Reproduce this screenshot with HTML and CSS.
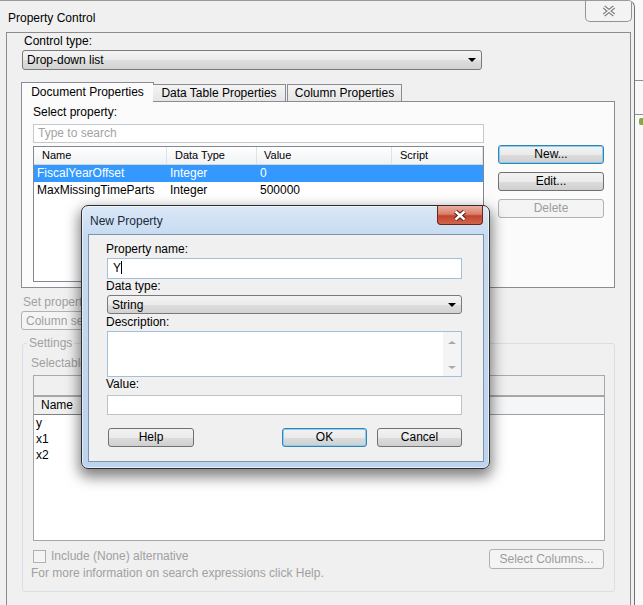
FILE: index.html
```html
<!DOCTYPE html>
<html>
  <head>
    <title>Property Control</title>
    <link rel="stylesheet" href="styles.css">
  </head>
  <body>
    <div class="desktop">
      <div class="window">
        <div class="titlebar">
          <span class="title">Property Control</span>
          <div class="caption-close">
            <svg width="14" height="12" viewBox="0 0 14 12">
              <path d="M2 2 L12 10 M12 2 L2 10" stroke="#7d7d7d" stroke-width="3.6" fill="none"/>
              <path d="M2 2 L12 10 M12 2 L2 10" stroke="#f7f7f7" stroke-width="1.6" fill="none"/>
            </svg>
          </div>
        </div>

        <div class="client">
          <div class="label control-label">Control type:</div>
          <div class="combo main-combo">
            <span>Drop-down list</span>
            <span class="arrow"></span>
          </div>

          <div class="tabs">
            <div class="tab tab-doc selected">Document Properties</div>
            <div class="tab tab-dt">Data Table Properties</div>
            <div class="tab tab-col">Column Properties</div>
          </div>
          <div class="tab-panel">
            <div class="label">Select property:</div>
            <div class="prop-row">
              <div class="prop-left">
                <div class="textbox search">Type to search</div>
                <div class="listview">
                  <div class="lv-header">
                    <span class="cell c1">Name</span>
                    <span class="cell c2">Data Type</span>
                    <span class="cell c3">Value</span>
                    <span class="cell c4">Script</span>
                  </div>
                  <div class="lv-row selected">
                    <span class="cell c1">FiscalYearOffset</span>
                    <span class="cell c2">Integer</span>
                    <span class="cell c3">0</span>
                    <span class="cell c4"></span>
                  </div>
                  <div class="lv-row">
                    <span class="cell c1">MaxMissingTimeParts</span>
                    <span class="cell c2">Integer</span>
                    <span class="cell c3">500000</span>
                    <span class="cell c4"></span>
                  </div>
                </div>
              </div>
              <div class="prop-buttons">
                <div class="btn focused">New...</div>
                <div class="btn">Edit...</div>
                <div class="btn disabled">Delete</div>
              </div>
            </div>
          </div>

          <div class="label disabled set-label">Set property value through:</div>
          <div class="combo disabled set-combo">
            <span class="clipped">Column selection</span>
          </div>

          <fieldset class="settings">
            <legend>Settings</legend>
            <div class="label disabled selectable-label">Selectable columns:</div>
            <div class="textbox col-search"></div>
            <div class="col-list">
              <div class="col-header">
                <span class="col-head-cell">Name</span>
              </div>
              <div class="col-item">y</div>
              <div class="col-item">x1</div>
              <div class="col-item">x2</div>
            </div>
            <div class="settings-footer">
              <div class="footer-left">
                <div class="check-line">
                  <span class="checkbox"></span>
                  <span>Include (None) alternative</span>
                </div>
                <div class="info-line">For more information on search expressions click Help.</div>
              </div>
              <div class="btn disabled select-columns">Select Columns...</div>
            </div>
          </fieldset>
        </div>
      </div>

      <div class="backdrop">
        <div class="bd-line first"></div>
        <div class="bd-line second"></div>
        <div class="bd-icon"></div>
      </div>
    </div>

    <div class="dialog">
      <div class="dlg-titlebar">
        <span class="dlg-title">New Property</span>
        <div class="dlg-close">
          <svg width="14" height="11" viewBox="0 0 14 11">
            <path d="M2.5 1.5 L11.5 9.5 M11.5 1.5 L2.5 9.5" stroke="#4a1c14" stroke-width="4.4" fill="none"/>
            <path d="M2.5 1.5 L11.5 9.5 M11.5 1.5 L2.5 9.5" stroke="#ffffff" stroke-width="2.4" fill="none"/>
          </svg>
        </div>
      </div>
      <div class="dlg-client">
        <div class="label">Property name:</div>
        <div class="textbox dlg-field name-field">Y<span class="caret"></span></div>
        <div class="label">Data type:</div>
        <div class="combo dlg-field type-combo">
          <span>String</span>
          <span class="arrow"></span>
        </div>
        <div class="label desc-label">Description:</div>
        <div class="textbox dlg-field desc-field">
          <div class="scrollbar">
            <span class="sb-up"></span>
            <span class="sb-down"></span>
          </div>
        </div>
        <div class="label">Value:</div>
        <div class="textbox dlg-field value-field"></div>
        <div class="dlg-buttons">
          <div class="btn help-btn">Help</div>
          <div class="btn focused ok-btn">OK</div>
          <div class="btn cancel-btn">Cancel</div>
        </div>
      </div>
    </div>
  </body>
</html>
```

FILE: styles.css
```css
* {
  box-sizing: border-box;
}

body {
  margin: 0;
  font-family: "Liberation Sans", Arial, sans-serif;
  font-size: 12px;
  color: #000;
  background: #f8fafc;
  overflow: hidden;
}

.desktop {
  display: flex;
  height: 605px;
}

/* main window */
.window {
  width: 635px;
  flex: none;
  background: #f0f0f0;
  border-right: 1px solid #727272;
  border-top: 1px solid #9a9a9a;
  border-top-right-radius: 7px;
  overflow: hidden;
}

.titlebar {
  display: flex;
  justify-content: space-between;
  height: 31px;
  padding-left: 8px;
}

.title {
  margin-top: 10px;
  line-height: 14px;
}

.caption-close {
  width: 47px;
  height: 21px;
  margin-right: 2px;
  border: 1px solid #939393;
  border-top: none;
  border-radius: 0 0 5px 5px;
  background: #f3f3f3;
  display: flex;
  align-items: center;
  justify-content: center;
}

.client {
  margin: 0 3px 0 6px;
  height: 574px;
  border: 1px solid #8c8c8c;
  border-bottom: none;
}

.label {
  line-height: 14px;
  white-space: nowrap;
}

.label.disabled,
.disabled {
  color: #a0a0a0;
}

.control-label {
  margin: 1px 0 0 17px;
}

/* combobox */
.combo {
  display: flex;
  align-items: center;
  justify-content: space-between;
  border: 1px solid #7a7a7a;
  border-radius: 3px;
  background: linear-gradient(#f3f3f3, #ebebeb 50%, #dedede 51%, #d2d2d2);
  padding: 0 5px 0 4px;
  line-height: 16px;
}

.combo .arrow {
  width: 0;
  height: 0;
  border-left: 4px solid transparent;
  border-right: 4px solid transparent;
  border-top: 4px solid #000;
}

.main-combo {
  width: 460px;
  height: 20px;
  margin: 2px 0 0 15px;
}

.combo.disabled {
  border-color: #adb2b5;
  background: #f4f4f4;
}

/* tabs */
.tabs {
  display: flex;
  align-items: flex-end;
  height: 19px;
  margin: 12px 0 0 14px;
  position: relative;
  z-index: 1;
}

.tab {
  height: 17px;
  border: 1px solid #898c95;
  border-bottom: none;
  background: linear-gradient(#f4f4f4, #e5e5e5);
  text-align: center;
  line-height: 16px;
}

.tab.selected {
  height: 20px;
  margin-bottom: -1px;
  background: #fbfbfb;
  line-height: 18px;
}

.tab-doc {
  width: 133px;
}

.tab-dt {
  width: 133px;
  margin-left: -1px;
  border-left: none;
}

.tab-col {
  width: 115px;
  margin-left: 1px;
}

.tab-panel {
  width: 594px;
  height: 187px;
  margin-left: 14px;
  border: 1px solid #898c95;
  background: #fbfbfb;
  padding: 3px 0 0 11px;
}

.prop-row {
  display: flex;
  margin-top: 5px;
}

.prop-left {
  width: 451px;
}

.textbox {
  background: #fff;
  border: 1px solid #c5c8cd;
  padding-left: 4px;
}

.search {
  height: 19px;
  line-height: 17px;
  color: #a3a3a3;
}

.listview {
  height: 136px;
  margin-top: 3px;
  border: 1px solid #828790;
  background: #fff;
  overflow: hidden;
}

.lv-header {
  display: flex;
  height: 18px;
  background: linear-gradient(#ffffff, #f1f2f4);
  border-bottom: 1px solid #d5d5d5;
  font-size: 11px;
  line-height: 17px;
}

.lv-header .cell {
  border-right: 1px solid #e0e2e6;
  padding-left: 8px;
}

.lv-header .c3 {
  padding-left: 7px;
}

.cell {
  flex: none;
  white-space: nowrap;
  overflow: hidden;
}

.c1 {
  width: 133px;
}

.c2 {
  width: 90px;
}

.c3 {
  width: 135px;
}

.c4 {
  flex: 1;
}

.lv-row {
  display: flex;
  height: 17px;
  line-height: 17px;
}

.lv-row .cell {
  padding-left: 3px;
}

.lv-row.selected {
  background: #3399ff;
  color: #fff;
}

.prop-buttons {
  width: 106px;
  margin: 21px 0 0 14px;
  display: flex;
  flex-direction: column;
  gap: 8px;
}

/* buttons */
.btn {
  height: 19px;
  border: 1px solid #707070;
  border-radius: 3px;
  background: linear-gradient(#f2f2f2, #ebebeb 50%, #dddddd 51%, #cfcfcf);
  text-align: center;
  line-height: 17px;
}

.btn.focused {
  border-color: #3c7fb1;
  box-shadow: inset 0 0 0 1px #7cd3f6;
}

.btn.disabled {
  border-color: #adb2b5;
  background: #f4f4f4;
  color: #9c9c9c;
}

/* lower part, partly under the dialog */
.set-label {
  width: 58px;
  overflow: hidden;
  margin: 7px 0 0 16px;
}

.set-combo {
  width: 460px;
  height: 19px;
  margin: 2px 0 0 14px;
}

.clipped {
  width: 55px;
  overflow: hidden;
  white-space: nowrap;
}

.settings {
  width: 593px;
  margin: 6px 0 0 15px;
  padding: 6px 9px 11px 10px;
  border: 1px solid #d5dfe5;
  border-radius: 3px;
  min-inline-size: 0;
}

.settings legend {
  margin-left: -6px;
  padding: 0 2px;
  line-height: 14px;
  color: #a0a0a0;
}

.selectable-label {
  width: 50px;
  overflow: hidden;
  margin-left: -2px;
}

.col-search {
  height: 21px;
  margin-top: 5px;
  background: #f0f0f0;
  border-color: #a9a9a9;
}

.col-list {
  height: 145px;
  border: 1px solid #a5a5a5;
  border-top: none;
  background: #fff;
}

.col-header {
  height: 19px;
  background: #f5f6f7;
  border-bottom: 1px solid #a0a0a0;
  border-top: 1px solid #a5a5a5;
}

.col-head-cell {
  display: inline-block;
  width: 60px;
  height: 18px;
  border: 1px solid #808080;
  border-top: none;
  border-left: none;
  padding-left: 7px;
  line-height: 17px;
  background: #f0f0f0;
}

.col-item {
  height: 16px;
  line-height: 16px;
  padding-left: 2px;
}

.settings-footer {
  display: flex;
  justify-content: space-between;
  align-items: flex-start;
  margin-top: 8px;
  color: #a0a0a0;
}

.check-line {
  display: flex;
  align-items: center;
  gap: 5px;
  line-height: 14px;
}

.checkbox {
  width: 13px;
  height: 13px;
  border: 1px solid #b1b1b1;
  background: #f4f4f4;
}

.info-line {
  margin: 3px 0 0 -2px;
  line-height: 14px;
}

.select-columns {
  width: 115px;
  height: 20px;
  margin-right: 1px;
  line-height: 18px;
}

/* desktop behind */
.backdrop {
  flex: 1;
  background: #f7f9fb;
}

.bd-line {
  border-bottom: 1px solid #8f8f8f;
}

.bd-line.first {
  height: 81px;
}

.bd-line.second {
  height: 34px;
}

.bd-icon {
  width: 6px;
  height: 7px;
  margin: 3px 0 0 4px;
  background: #7fae3c;
  border-radius: 2px;
}

/* New Property dialog */
.dialog {
  position: absolute;
  left: 81px;
  top: 205px;
  width: 409px;
  height: 264px;
  border: 1px solid #2e2e2e;
  border-radius: 7px;
  background: linear-gradient(#dbe8f7, #c6dbf1 30px, #bcd4ed);
  box-shadow: inset 0 0 0 1px rgba(255, 255, 255, 0.55), 0 6px 14px 2px rgba(0, 0, 0, 0.5);
}

.dlg-titlebar {
  display: flex;
  justify-content: space-between;
  align-items: flex-start;
  height: 28px;
  padding-left: 8px;
}

.dlg-title {
  align-self: center;
  margin-top: 1px;
  color: #1a2a3e;
  line-height: 14px;
}

.dlg-close {
  width: 46px;
  height: 19px;
  margin-right: 6px;
  border: 1px solid #6b2418;
  border-top: none;
  border-radius: 0 0 4px 4px;
  background: linear-gradient(#eab0a3, #d8806b 45%, #c4432d 55%, #d0664f);
  display: flex;
  align-items: center;
  justify-content: center;
}

.dlg-client {
  height: 228px;
  margin: 0 5px 0 6px;
  border: 1px solid #7f93ae;
  background: #f0f0f0;
  padding: 7px 0 0 17px;
}

.dlg-field {
  width: 355px;
  margin-left: 1px;
}

.name-field {
  height: 21px;
  margin-top: 2px;
  border-color: #a4bfdc;
  line-height: 19px;
  padding-left: 5px;
}

.caret {
  display: inline-block;
  width: 1px;
  height: 13px;
  background: #000;
  vertical-align: -2px;
}

.type-combo {
  height: 19px;
  margin-top: 2px;
}

.desc-label {
  margin-top: 1px;
}

.desc-field {
  height: 46px;
  margin-top: 2px;
  border-color: #a4bfdc;
  display: flex;
  justify-content: flex-end;
}

.scrollbar {
  width: 18px;
  background: #f4f4f4;
  display: flex;
  flex-direction: column;
  justify-content: space-between;
  align-items: center;
  padding: 9px 0 7px;
}

.sb-up {
  border-left: 4px solid transparent;
  border-right: 4px solid transparent;
  border-bottom: 3px solid #a8a8a8;
}

.sb-down {
  border-left: 4px solid transparent;
  border-right: 4px solid transparent;
  border-top: 3px solid #a8a8a8;
}

.value-field {
  height: 20px;
  margin-top: 4px;
  border-color: #c2c2c2;
}

.dlg-buttons {
  display: flex;
  margin-top: 13px;
  padding-right: 21px;
}

.help-btn {
  width: 86px;
  margin-left: 2px;
}

.ok-btn {
  width: 85px;
  margin-left: auto;
}

.cancel-btn {
  width: 85px;
  margin-left: 10px;
}
```
